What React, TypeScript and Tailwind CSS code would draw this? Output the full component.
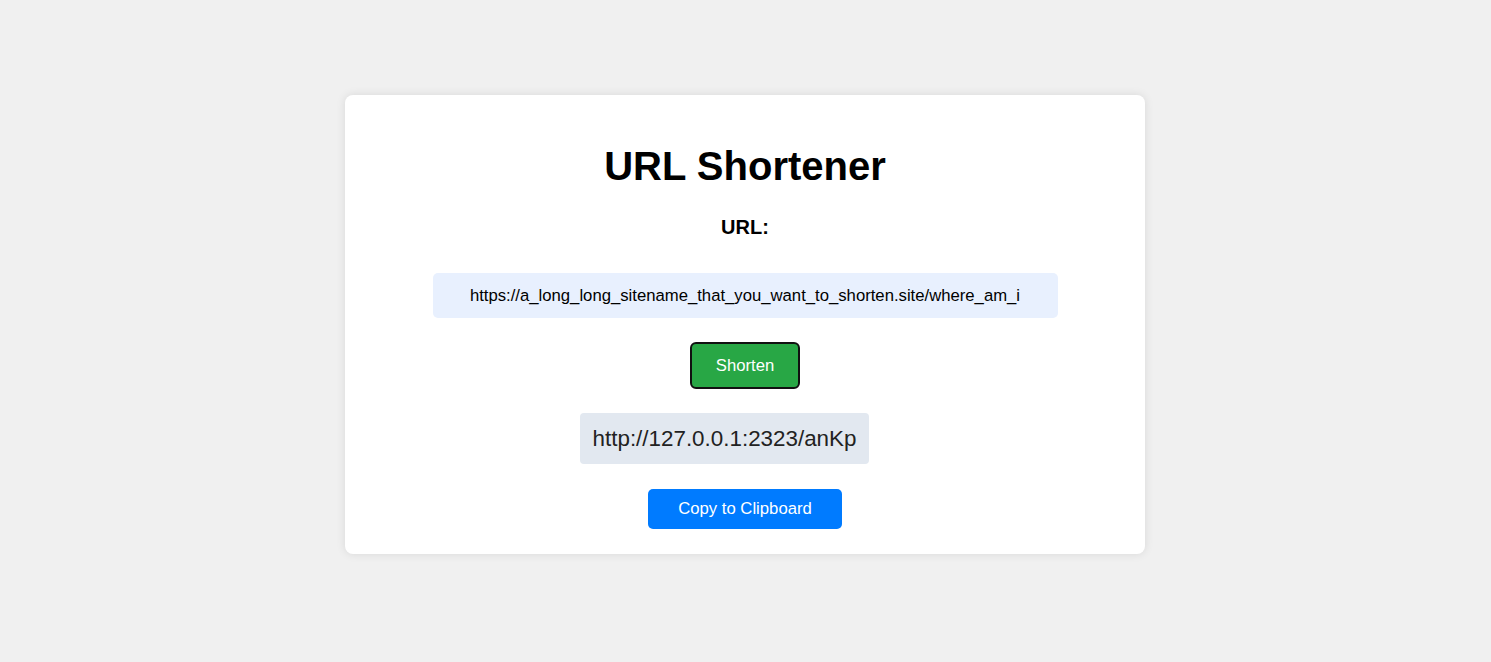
import { useState } from "react";

export default function App() {
  const [url, setUrl] = useState(
    "https://a_long_long_sitename_that_you_want_to_shorten.site/where_am_i"
  );
  const shortUrl = "http://127.0.0.1:2323/anKp";

  return (
    <div
      className="min-h-screen w-full bg-[#f0f0f0] pt-[95px] flex justify-center"
      style={{ fontFamily: '"Liberation Sans", Arial, sans-serif' }}
    >
      <div className="w-[800px] h-[459px] -ml-px bg-white rounded-[8px] shadow-[0_0_10px_rgba(0,0,0,0.1)] flex flex-col items-center pt-[48px]">
        <h1 className="text-[40px] leading-[46px] font-bold text-black">URL Shortener</h1>

        <label className="mt-[27px] text-[20px] leading-[23px] font-bold text-black">URL:</label>

        <input
          value={url}
          onChange={(e) => setUrl(e.target.value)}
          className="mt-[34px] w-[625px] h-[45px] rounded-[5px] bg-[#e8f0fe] text-center text-[16.7px] text-black outline-none"
        />

        <button className="mt-[24px] w-[110px] h-[47px] rounded-[6px] border-2 border-[#111] bg-[#28a745] text-white text-[16.7px]">
          Shorten
        </button>

        <div className="mt-[24px] mr-[41px] h-[51px] px-[13px] flex items-center rounded-[4px] bg-[#e2e8f0] text-[22.4px] text-[#222]">
          {shortUrl}
        </div>

        <button className="mt-[25px] w-[194px] h-[40px] rounded-[5px] bg-[#007bff] text-white text-[16.7px]">
          Copy to Clipboard
        </button>
      </div>
    </div>
  );
}
